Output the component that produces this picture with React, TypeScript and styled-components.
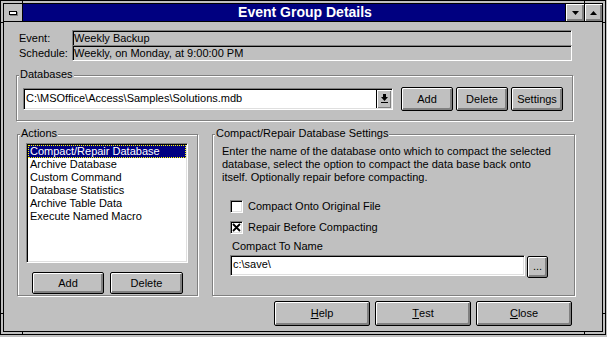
import styled, { createGlobalStyle } from 'styled-components';

const GlobalStyle = createGlobalStyle`
  html, body {
    margin: 0;
    padding: 0;
    background: #c0c0c0;
  }
  body {
    font-family: "Liberation Sans", Arial, sans-serif;
    font-size: 11px;
    color: #000;
  }
  * {
    box-sizing: border-box;
  }
`;

const actions = [
  'Compact/Repair Database',
  'Archive Database',
  'Custom Command',
  'Database Statistics',
  'Archive Table Data',
  'Execute Named Macro',
];

const DownTriangle = () => (
  <svg width="7" height="4" viewBox="0 0 7 4">
    <polygon points="0,0 7,0 3.5,4" fill="#000" />
  </svg>
);

const UpTriangle = () => (
  <svg width="7" height="4" viewBox="0 0 7 4">
    <polygon points="0,4 7,4 3.5,0" fill="#000" />
  </svg>
);

const ComboArrow = () => (
  <svg width="7" height="10" viewBox="0 0 7 10">
    <rect x="2" y="0" width="3" height="3" fill="#000" />
    <polygon points="0,3 7,3 3.5,7" fill="#000" />
    <rect x="0" y="8" width="7" height="1" fill="#000" />
  </svg>
);

const CrossMark = () => (
  <svg width="9" height="9" viewBox="0 0 9 9">
    <path d="M1 1 L8 8 M8 1 L1 8" stroke="#000" strokeWidth="1.8" />
  </svg>
);

const App = () => {
  return (
    <>
      <GlobalStyle />
      <Frame>
        <Notch $side="top" $at={21} />
        <Notch $side="top" $at={583} />
        <Notch $side="bottom" $at={21} />
        <Notch $side="bottom" $at={583} />
        <Notch $side="left" $at={21} />
        <Notch $side="left" $at={312} />
        <Notch $side="right" $at={21} />
        <Notch $side="right" $at={312} />
        <Inner>
          <TitleBar>
            <SysMenu>
              <SysGlyph />
            </SysMenu>
            <Title>Event Group Details</Title>
            <TitleButton $w={18}>
              <DownTriangle />
            </TitleButton>
            <TitleButton $w={17}>
              <UpTriangle />
            </TitleButton>
          </TitleBar>

          <Body>
            <InfoBlock>
              <InfoRow>
                <InfoLabel>Event:</InfoLabel>
                <InfoField>Weekly Backup</InfoField>
              </InfoRow>
              <InfoRow>
                <InfoLabel>Schedule:</InfoLabel>
                <InfoField $last>Weekly, on Monday, at 9:00:00 PM</InfoField>
              </InfoRow>
            </InfoBlock>

            <DatabasesBox>
              <GroupLabel>Databases</GroupLabel>
              <DbRow>
                <Combo>
                  <ComboText>C:\MSOffice\Access\Samples\Solutions.mdb</ComboText>
                  <DropButton>
                    <ComboArrow />
                  </DropButton>
                </Combo>
                <DbButtons>
                  <Button $w={52} $h={24}>Add</Button>
                  <Button $w={52} $h={24}>Delete</Button>
                  <Button $w={52} $h={24}>Settings</Button>
                </DbButtons>
              </DbRow>
            </DatabasesBox>

            <LowerRow>
              <ActionsBox>
                <GroupLabel>Actions</GroupLabel>
                <ListBox>
                  {actions.map((a, i) => (
                    <ListItem key={a} $selected={i === 0}>
                      {a}
                    </ListItem>
                  ))}
                </ListBox>
                <ListButtons>
                  <Button $w={72} $h={22}>Add</Button>
                  <Button $w={73} $h={22}>Delete</Button>
                </ListButtons>
              </ActionsBox>

              <SettingsBox>
                <GroupLabel>Compact/Repair Database Settings</GroupLabel>
                <Desc>
                  Enter the name of the database onto which to compact the selected
                  <br />
                  database, select the option to compact the data base back onto
                  <br />
                  itself. Optionally repair before compacting.
                </Desc>
                <CheckList>
                  <CheckRow>
                    <CheckBox />
                    <span>Compact Onto Original File</span>
                  </CheckRow>
                  <CheckRow>
                    <CheckBox>
                      <CrossMark />
                    </CheckBox>
                    <span>Repair Before Compacting</span>
                  </CheckRow>
                </CheckList>
                <NameLabel>Compact To Name</NameLabel>
                <NameRow>
                  <NameField>c:\save\</NameField>
                  <BrowseButton $w={21} $h={22}>...</BrowseButton>
                </NameRow>
              </SettingsBox>
            </LowerRow>

            <Footer>
              <Button $w={96} $h={25}>
                <u>H</u>elp
              </Button>
              <Button $w={96} $h={25}>
                <u>T</u>est
              </Button>
              <Button $w={96} $h={25}>
                <u>C</u>lose
              </Button>
            </Footer>
          </Body>
        </Inner>
      </Frame>
    </>
  );
};

export default App;

const Frame = styled.div`
  position: relative;
  width: 606px;
  height: 335px;
  border: 1px solid #000;
  padding: 2px;
  background: #c0c0c0;
`;

const Notch = styled.span<{ $side: 'top' | 'bottom' | 'left' | 'right'; $at: number }>`
  position: absolute;
  background: #000;
  ${(p) =>
    p.$side === 'top' || p.$side === 'bottom'
      ? `left: ${p.$at}px; ${p.$side}: 0; width: 1px; height: 2px;`
      : `top: ${p.$at}px; ${p.$side}: 0; width: 2px; height: 1px;`}
`;

const Inner = styled.div`
  height: 100%;
  border: 1px solid #000;
  display: flex;
  flex-direction: column;
`;

const TitleBar = styled.div`
  display: flex;
  height: 18px;
  background: #000080;
  border-bottom: 1px solid #000;
`;

const SysMenu = styled.div`
  width: 19px;
  border-right: 1px solid #000;
  background: #c0c0c0;
  display: flex;
  align-items: center;
  justify-content: center;
`;

const SysGlyph = styled.span`
  width: 8px;
  height: 4px;
  background: #fff;
  border: 1px solid #000;
  box-shadow: 1px 1px 0 #808080;
`;

const Title = styled.div`
  flex: 1;
  padding-left: 22px;
  color: #fff;
  font-weight: bold;
  font-size: 14px;
  line-height: 17px;
  text-align: center;
  white-space: nowrap;
`;

const TitleButton = styled.div<{ $w: number }>`
  width: ${(p) => p.$w + 1}px;
  border-left: 1px solid #000;
  background: #c0c0c0;
  box-shadow: inset 1px 1px 0 #fff, inset -1px -1px 0 #808080,
    inset -2px -2px 0 #808080;
  display: flex;
  align-items: center;
  justify-content: center;
`;

const Body = styled.div`
  flex: 1;
  display: flex;
  flex-direction: column;
  padding: 8px 0 0 12px;
`;

const InfoBlock = styled.div`
  margin-left: 3px;
  display: flex;
  flex-direction: column;
`;

const InfoRow = styled.div`
  display: flex;
`;

const InfoLabel = styled.div`
  width: 53px;
  padding-top: 1px;
  line-height: 14px;
`;

const InfoField = styled.div<{ $last?: boolean }>`
  width: 500px;
  height: ${(p) => (p.$last ? 16 : 15)}px;
  border-top: 1px solid #808080;
  border-left: 1px solid #808080;
  border-right: 1px solid #fff;
  border-bottom: ${(p) => (p.$last ? '1px solid #fff' : 'none')};
  box-shadow: inset 1px 1px 0 #000;
  padding-left: 1px;
  line-height: 14px;
  white-space: nowrap;
`;

const GroupBox = styled.div`
  position: relative;
  border: 1px solid #808080;
  box-shadow: inset 1px 1px 0 #fff, 1px 1px 0 #fff;
`;

const GroupLabel = styled.span`
  position: absolute;
  top: -8px;
  left: 2px;
  padding: 0 1px;
  background: #c0c0c0;
  line-height: 13px;
  white-space: nowrap;
`;

const DatabasesBox = styled(GroupBox)`
  margin-top: 14px;
  width: 557px;
  height: 46px;
  padding: 11px 0 0 6px;
`;

const DbRow = styled.div`
  display: flex;
  align-items: center;
  gap: 8px;
`;

const Sunken = styled.div`
  border-top: 1px solid #808080;
  border-left: 1px solid #808080;
  border-right: 1px solid #fff;
  border-bottom: 1px solid #fff;
  box-shadow: inset 1px 1px 0 #000, inset -1px -1px 0 #dfdfdf;
  background: #fff;
`;

const Combo = styled(Sunken)`
  display: flex;
  width: 370px;
  height: 22px;
  padding: 1px;
`;

const ComboText = styled.div`
  flex: 1;
  line-height: 17px;
  padding-left: 1px;
  white-space: nowrap;
`;

const DropButton = styled.div`
  width: 15px;
  background: #c0c0c0;
  border-left: 1px solid #000;
  box-shadow: inset 1px 1px 0 #fff, inset -1px -1px 0 #808080;
  display: flex;
  align-items: center;
  justify-content: center;
`;

const DbButtons = styled.div`
  display: flex;
  gap: 3px;
`;

const Button = styled.button<{ $w: number; $h: number }>`
  width: ${(p) => p.$w}px;
  height: ${(p) => p.$h}px;
  padding: 0;
  border: 1px solid #000;
  border-radius: 2px;
  background: #c0c0c0;
  box-shadow: inset 1px 1px 0 #fff, inset -1px -1px 0 #808080,
    inset -2px -2px 0 #808080;
  font: inherit;
  color: #000;
  line-height: 13px;
  display: flex;
  align-items: center;
  justify-content: center;
`;

const LowerRow = styled.div`
  display: flex;
  gap: 14px;
  margin-top: 13px;
  margin-left: 1px;
`;

const ActionsBox = styled(GroupBox)`
  width: 181px;
  height: 162px;
  padding: 8px 0 0 8px;
  display: flex;
  flex-direction: column;
`;

const ListBox = styled(Sunken)`
  width: 162px;
  height: 120px;
  padding: 1px;
`;

const ListItem = styled.div<{ $selected?: boolean }>`
  line-height: 13px;
  height: 13px;
  padding-left: 2px;
  white-space: nowrap;
  background: ${(p) => (p.$selected ? '#000080' : 'transparent')};
  color: ${(p) => (p.$selected ? '#fff' : '#000')};
  outline: ${(p) => (p.$selected ? '1px dotted #ffff00' : 'none')};
  outline-offset: -1px;
`;

const ListButtons = styled.div`
  display: flex;
  gap: 6px;
  margin: 9px 0 0 6px;
`;

const SettingsBox = styled(GroupBox)`
  width: 363px;
  height: 162px;
  padding: 10px 0 0 9px;
`;

const Desc = styled.p`
  margin: 0;
  line-height: 13px;
  white-space: nowrap;
`;

const CheckList = styled.div`
  display: flex;
  flex-direction: column;
  gap: 8px;
  margin: 16px 0 0 8px;
`;

const CheckRow = styled.div`
  display: flex;
  align-items: center;
  gap: 5px;
  height: 13px;
  line-height: 13px;
`;

const CheckBox = styled(Sunken)`
  width: 13px;
  height: 13px;
  display: flex;
  align-items: center;
  justify-content: center;
`;

const NameLabel = styled.div`
  margin: 6px 0 0 10px;
  line-height: 13px;
`;

const NameRow = styled.div`
  display: flex;
  align-items: flex-start;
  gap: 2px;
  margin: 2px 0 0 8px;
`;

const NameField = styled(Sunken)`
  width: 295px;
  height: 21px;
  padding-left: 2px;
  line-height: 17px;
`;

const BrowseButton = styled(Button)`
  margin-top: 1px;
  padding-bottom: 2px;
`;

const Footer = styled.div`
  display: flex;
  justify-content: flex-end;
  gap: 5px;
  margin: 5px 30px 0 0;
`;
